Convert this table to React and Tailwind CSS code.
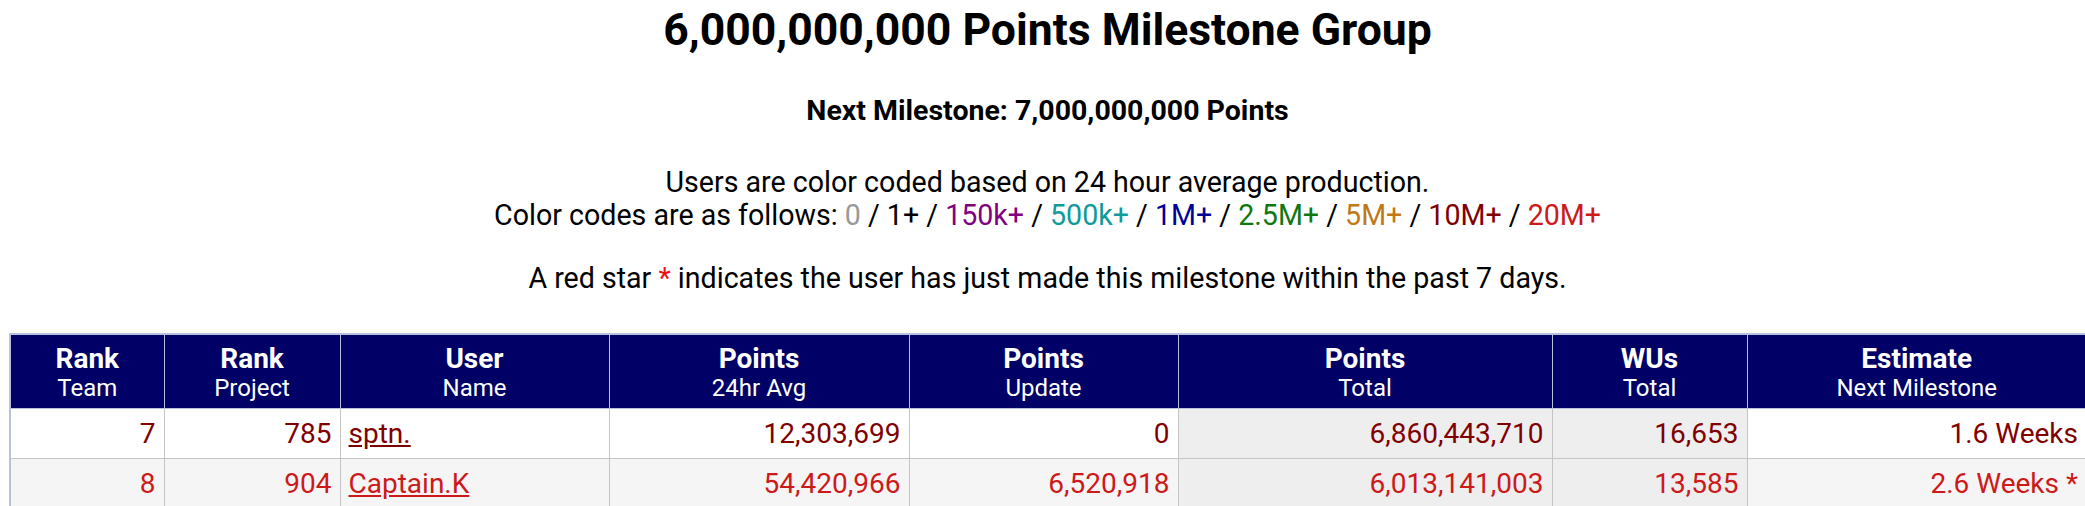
const codes = [
  ['0', 'text-[#999999]'],
  ['1+', 'text-black'],
  ['150k+', 'text-[#800080]'],
  ['500k+', 'text-[#109a9a]'],
  ['1M+', 'text-[#000099]'],
  ['2.5M+', 'text-[#107810]'],
  ['5M+', 'text-[#c07818]'],
  ['10M+', 'text-[#800000]'],
  ['20M+', 'text-[#cc1a1a]']
]

const columns = [
  ['Rank', 'Team', 'w-[154px]'],
  ['Rank', 'Project', 'w-[176px]'],
  ['User', 'Name', 'w-[269px]'],
  ['Points', '24hr Avg', 'w-[300px]'],
  ['Points', 'Update', 'w-[269px]'],
  ['Points', 'Total', 'w-[374px]'],
  ['WUs', 'Total', 'w-[195px]'],
  ['Estimate', 'Next Milestone', 'w-[340px]']
]

const users = [
  { team: 7, project: 785, name: 'sptn.', avg: '12,303,699', update: '0', total: '6,860,443,710', wus: '16,653', est: '1.6 Weeks', color: 'text-[#800000]', row: 'bg-white' },
  { team: 8, project: 904, name: 'Captain.K', avg: '54,420,966', update: '6,520,918', total: '6,013,141,003', wus: '13,585', est: '2.6 Weeks *', color: 'text-[#cc1a1a]', row: 'bg-[#f5f5f5]' }
]

function Cell({ children, className = '' }) {
  return (
    <td className={`border border-[#c4c4c4] px-[8px] py-[8px] leading-[33px] ${className}`}>
      {children}
    </td>
  )
}

export default function App() {
  return (
    <div className="w-full overflow-hidden bg-white text-black font-['Roboto',sans-serif] text-[28px] pt-[4px] pb-[20px]">
      <div className="pl-[10px]">
        <h2 className="text-center text-[44.5px] font-bold leading-[52px]">6,000,000,000 Points Milestone Group</h2>
        <p className="mt-[38px] text-center text-[28.5px] font-bold leading-[33px]">Next Milestone: 7,000,000,000 Points</p>

        <div className="mt-[39px] text-center text-[28.6px] leading-[33px]">
          <p>Users are color coded based on 24 hour average production.</p>
          <p>
            Color codes are as follows:{' '}
            {codes.map(([label, cls], i) => (
              <span key={label}>
                <span className={cls}>{label}</span>
                {i < codes.length - 1 && ' / '}
              </span>
            ))}
          </p>
          <p className="mt-[30px]">
            A red star <span className="text-[#ee1111]">*</span> indicates the user has just made this milestone within the past 7 days.
          </p>
        </div>
      </div>

      <table className="mt-[38px] ml-[9px] w-[2078px] table-fixed border-collapse border-2 border-[#b8c0dc]">
        <thead>
          <tr className="bg-[#000066] text-white">
            {columns.map(([top, sub, w], i) => (
              <th key={i} className={`${w} border border-[#b8c0dc] pt-[9px] pb-[6px] text-center font-normal`}>
                <div className="font-bold leading-[30px]">{top}</div>
                <div className="text-[24px] leading-[28px]">{sub}</div>
              </th>
            ))}
          </tr>
        </thead>
        <tbody>
          {users.map(u => (
            <tr key={u.name} className={`${u.row} ${u.color}`}>
              <Cell className="text-right">{u.team}</Cell>
              <Cell className="text-right">{u.project}</Cell>
              <Cell className="text-left">
                <a href="#" className="underline">{u.name}</a>
              </Cell>
              <Cell className="text-right">{u.avg}</Cell>
              <Cell className="text-right">{u.update}</Cell>
              <Cell className="text-right bg-[#eeeeee]">{u.total}</Cell>
              <Cell className="text-right bg-[#eeeeee]">{u.wus}</Cell>
              <Cell className="text-right">{u.est}</Cell>
            </tr>
          ))}
        </tbody>
      </table>
    </div>
  )
}
